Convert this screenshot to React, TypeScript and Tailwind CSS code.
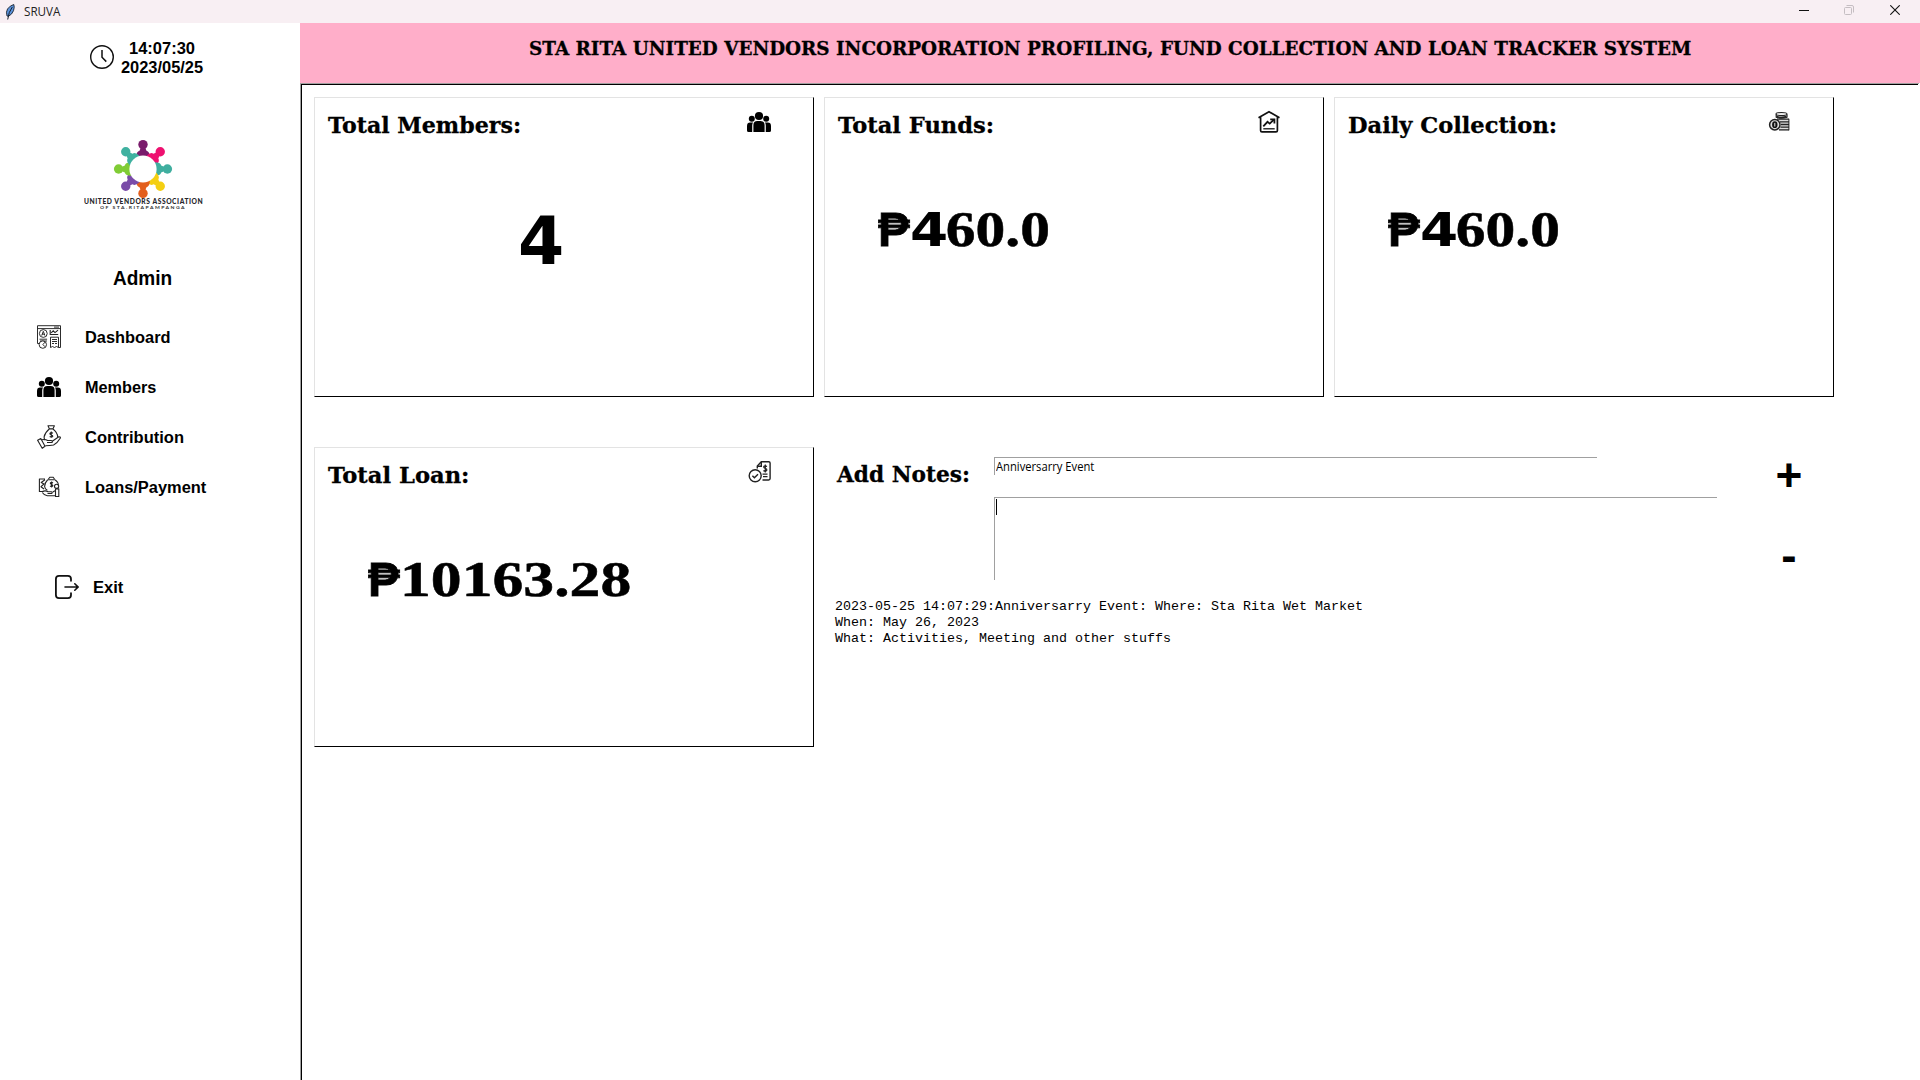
import { useLayoutEffect, useRef, useState } from "react";
import type { ReactNode } from "react";

/** A single line of text stretched horizontally to an exact width. */
function Fit({ width, className = "", children }: { width: number; className?: string; children: ReactNode }) {
  const ref = useRef<HTMLSpanElement>(null);
  const [scale, setScale] = useState(1);
  useLayoutEffect(() => {
    if (ref.current) setScale(width / ref.current.offsetWidth);
  }, [width]);
  return (
    <div className={className} style={{ width }}>
      <span ref={ref} className="inline-block origin-left whitespace-pre" style={{ transform: `scaleX(${scale})` }}>
        {children}
      </span>
    </div>
  );
}

const SERIF = "font-['DejaVu_Serif',serif] font-bold [-webkit-text-stroke:0.3px_black]";
const DIGITS = "font-['Liberation_Serif',serif] font-bold [-webkit-text-stroke:0.5px_black]";

function PeopleIcon() {
  return (
    <svg viewBox="0 0 24 24" className="size-6" fill="#000">
      <circle cx="12" cy="6" r="4.1" />
      <circle cx="4.8" cy="8.8" r="3" />
      <circle cx="19.2" cy="8.8" r="3" />
      <path d="M6.400 22V15q0-4 4-4h3.200q4 0 4 4v7z" />
      <path d="M5.200 22H1.600Q0 22 0 20.400V16q0-3.400 3.200-3.400h2.900q-.9 1.200-.9 2.800z" />
      <path d="M18.800 22h3.600q1.600 0 1.600-1.600V16q0-3.400-3.200-3.400h-2.900q.9 1.200.9 2.800z" />
    </svg>
  );
}

function HouseChartIcon() {
  return (
    <svg viewBox="0 0 24 24" className="size-6" fill="none" stroke="#111" strokeWidth="1.700">
      <path d="M1.500 7.800 12 1.700l10.500 6.100M3.600 7v13.500q0 1.400 1.400 1.400h14q1.400 0 1.400-1.400V7" />
      <path d="m6.300 16.300 4.200-4.500 2.200 1.800 4-3.700" strokeWidth="1.800" />
      <path d="M13.200 9.400h4.200v4" strokeWidth="1.800" />
      <path d="M6.300 18.800h11.400" strokeWidth="1.300" />
    </svg>
  );
}

function CoinsIcon() {
  return (
    <svg viewBox="-1 0 24 24" className="size-6" fill="none" stroke="#222">
      <path d="M8.500 4v3.500q0 1.500 2 1.500h10.300V20.500H11l1.500-5-2-6" fill="#ddd" stroke="none" />
      <ellipse cx="13.500" cy="4" rx="5.500" ry="1.500" fill="#eee" strokeWidth="1.100" />
      <path d="M8.200 4.500v2.700q5.300 2 10.800 0V4.500" strokeWidth="1.200" />
      <path d="M8.500 6.600q5 1.600 10 0" strokeWidth="1.600" />
      <path d="M9 9.200h12M12 11.900h9M13 14.500h8M12.500 17.100h8.500M11 19.800h10" strokeWidth="1.300" />
      <path d="M20.900 8.800v11.500" strokeWidth="1" />
      <circle cx="6.800" cy="14.700" r="5.200" strokeWidth="1.500" fill="#ddd" />
      <ellipse cx="6.800" cy="14.700" rx="2.700" ry="3.400" fill="#111" stroke="none" />
      <path d="M6.800 12.900v3.600" stroke="#fff" strokeWidth=".9" />
    </svg>
  );
}

function BillCheckIcon() {
  return (
    <svg viewBox="-1 0 24 24" className="size-6" fill="none" stroke="#222" strokeWidth="1.400">
      <path d="M9.300 8.500V6l4-4.300h7.400q1.400 0 1.400 1.400v15.500q0 1.400-1.400 1.400h-6.200" />
      <path d="M9.300 6.200h4V2" />
      <path d="M19 6.500q-2.500-1.300-3.300.3c-.4 1.600 3.500 1.600 3.200 3.300q-.7 1.700-3.500.5M17.300 4.500v8" strokeWidth="1.200" />
      <path d="M14.500 14.200h5M15 16.700h4.500" strokeWidth="1.300" />
      <circle cx="7.200" cy="15.800" r="6" fill="#fff" />
      <path d="m4.400 15.800 2 2 3.600-3.600" />
    </svg>
  );
}

function DashboardIcon() {
  return (
    <svg viewBox="0 0 24 24" className="size-6" fill="none" stroke="#222" strokeWidth=".95">
      <path d="M2.500 18.500H.5V.7h23v21.800h-2M.5 3.600h23M17 2.100h5" />
      <circle cx="6.300" cy="8.500" r="3.900" />
      <path d="m4.700 10.600 1.600-4.300 1.600 4.300M5.100 9.200h2.400" />
      <path d="M13.200 5v4.500h8M14.200 7.800l2-2 1.800 1.800 3-2.500" strokeWidth="1.100" />
      <path d="M2.500 14.200h7.600M3 16h7M13.500 12.200h8v10.300l-2-1-2 1-2-1-2 1zM15 14.500h5M15 16.500h5M15 18.500h2M18 18.500h2" />
      <circle cx="5.800" cy="19.600" r="3.700" fill="#fff" />
      <path d="m8.200 17-2.300 2.500 2 2.200" />
    </svg>
  );
}

function ContributionIcon() {
  return (
    <svg viewBox="0 0 24 24" className="size-6" fill="none" stroke="#222" strokeWidth="1.100" strokeLinejoin="round">
      <path d="M11 .7h6.400l-1.500 3.200h-3.500zM12.200 4Q8 7.500 7.100 12q-.1 2 1 3.200M16 4q4.500 3.600 4.700 8" />
      <path d="M15.900 8.200q-1.900-1.300-3 .1c-.5 1.500 3 1.400 2.900 3q-.7 1.500-3.100.3M14.300 6.600v6.100" />
      <path d="m.6 15.200 3.200-1.700 4.200 7.800-2.800 2zM4.600 14.800q3.600-1 6 .7h3.600q1.800.4.900 2H10M15.300 16.200l6.500-4.400q1.800-.1 1.600 1.200-3 5-6.800 7-3.600.8-8.200.8" />
    </svg>
  );
}

function LoansIcon() {
  return (
    <svg viewBox="0 0 24 24" className="size-6" fill="none" stroke="#222" strokeWidth="1.100" strokeLinejoin="round">
      <path d="M8 4H2.400v12.500h4.200M8 4.800 4.200 7.500 7 9l-3 2.700L7 14M11.400 4 13 2.200h3L17.500 4" />
      <path d="M10.500 4.700h7.800M10.500 5Q7.500 8 7.600 11.500q.3 2.500 2.700 3.700M18.300 5q3 2 3 5.200" />
      <path d="M16 8q-1.700-1.200-2.700.1c-.3 1.400 2.600 1.300 2.600 2.700q-.7 1.400-2.900.3M14.600 6.500v6" />
      <circle cx="19.600" cy="11.300" r="2.100" />
      <path d="M5.300 16.500q3.200-1.300 5.700.3h3.300q1.600.5.500 1.700h-4.300M5.300 17.500q2 3 5 3.300h8.200M15.800 17l2.700-1.500V14l3.300-.3v7.800h-3.300V16" />
    </svg>
  );
}

function ExitIcon() {
  return (
    <svg viewBox="0 0 24 24" className="size-6" fill="none" stroke="#111" strokeWidth="1.800" strokeLinecap="round">
      <path d="M16 5.800V4q0-3.100-3.100-3.100H4Q.9.900.9 4v16q0 3.100 3.100 3.100h8.900Q16 23.100 16 20v-1.800" />
      <path d="M10 12h13M19.800 8.800 23 12l-3.200 3.200" strokeWidth="1.600" />
    </svg>
  );
}

function ClockIcon() {
  return (
    <svg viewBox="0 0 24 24" className="size-6" fill="none" stroke="#111">
      <circle cx="12" cy="12" r="11.300" strokeWidth="1.400" />
      <path d="M12 5v7.300l4.300 4.300" strokeWidth="1.500" />
    </svg>
  );
}

const LOGO_COLORS = ["#7a1b6c", "#ee1170", "#3fae9f", "#f4cf12", "#e35f1d", "#7a4ca8", "#80cc35", "#3fb1a0"];

function Logo() {
  return (
    <div className="flex w-[120px] flex-col items-center">
      <svg viewBox="-30 -30 60 60" className="size-[60px]">
        {LOGO_COLORS.map((color, i) => (
          <g key={color + i} fill={color} transform={`rotate(${i * 45})`}>
            <circle cx="0" cy="-24.400" r="4.700" />
            <path d="M-6.800-11.500Q-6.800-17.500-3.500-18.200L-2.300-21h4.600l1.200 2.800Q6.800-17.500 6.800-11.500z" />
          </g>
        ))}
        <circle r="13.600" fill="#fff" />
      </svg>
      <Fit width={119} className="-mt-px h-2 font-['Lato',sans-serif] text-[7.200px] leading-2 font-black tracking-[0.6px] text-[#26262b]">
        UNITED VENDORS ASSOCIATION
      </Fit>
      <Fit width={86} className="-mt-px -ml-px h-[5px] font-['Lato',sans-serif] text-[4.500px] leading-[5px] font-bold tracking-[1.300px] text-[#333]">
        OF STA.RITAPAMPANGA
      </Fit>
    </div>
  );
}

function NavItem({ icon, label, width }: { icon: ReactNode; label: string; width: number }) {
  return (
    <div className="flex h-[50px] items-center">
      {icon}
      <Fit width={width} className="ml-6 pt-0.5 text-base leading-5 font-bold">{label}</Fit>
    </div>
  );
}

function Card({ title, width, icon, children }: { title: string; width: number; icon: ReactNode; children: ReactNode }) {
  return (
    <section className="h-[300px] w-[500px] border border-t-[#e3e3e3] border-r-black border-b-black border-l-[#e3e3e3]">
      <div className="flex h-[43px] justify-between pt-3 pr-[42px] pl-[13px]">
        <Fit width={width} className={`mt-px text-[22px] leading-7 ${SERIF}`}>{title}</Fit>
        {icon}
      </div>
      {children}
    </section>
  );
}

function Amount({ value, width }: { value: string; width: number }) {
  return (
    <div className="mt-[58px] ml-[53px] flex h-[60px]">
      <Fit width={32} className="font-['Liberation_Sans',sans-serif] text-[49px] leading-[60px] font-bold [-webkit-text-stroke:0.8px_black]">₱</Fit>
      <Fit width={width} className={`text-[51px] leading-[60px] ${DIGITS}`}>
        {value.split("").map((char, i) =>
          char === "4" ? (
            <span key={i} className="font-['DejaVu_Sans',sans-serif] text-[47px] leading-none tracking-[-2px] [-webkit-text-stroke:0px]">4</span>
          ) : (
            char
          ),
        )}
      </Fit>
    </div>
  );
}

function TitleBar() {
  return (
    <header className="flex h-[23px] shrink-0 items-center bg-[#f8eff3]">
      <svg viewBox="0 0 10 16" className="ml-[5px] h-4 w-[10px]">
        <path d="M8.800.5q1 2.500-.3 6.200Q7 10.500 3.500 12.300L2 12Q.7 8 2.500 5 5 1.500 8.800.5z" fill="#5b93dc" stroke="#16202e" strokeWidth=".9" />
        <path d="M7.300 3Q3.500 8 2.700 15.500" fill="none" stroke="#16202e" strokeWidth="1" />
      </svg>
      <Fit width={36} className="ml-[9px] font-['Open_Sans',sans-serif] text-xs leading-5 text-[#222]">SRUVA</Fit>
      <div className="mr-5 ml-auto flex items-center pb-[3px]">
        <svg viewBox="0 0 10 10" className="mr-[35px] size-[10px]"><path d="M0 5.500h10" stroke="#111" /></svg>
        <svg viewBox="0 0 10 10" className="mr-9 size-[10px]" fill="none" stroke="#c5bec2">
          <rect x=".5" y="2.500" width="7" height="7" rx="1" />
          <path d="M2.500.5H8q1.500 0 1.500 1.500v5.500" />
        </svg>
        <svg viewBox="0 0 10 10" className="size-[10px]"><path d="m.3.300 9.400 9.400m0-9.400L.3 9.700" stroke="#111" strokeWidth="1.100" /></svg>
      </div>
    </header>
  );
}

function Sidebar() {
  return (
    <aside className="w-[300px] shrink-0">
      <div className="flex pt-[16px] pl-[90px]">
        <div className="mt-[6px]"><ClockIcon /></div>
        <div className="ml-[7px] flex flex-col items-center text-base leading-[19px] font-bold">
          <Fit width={66} className="h-[19px]">14:07:30</Fit>
          <Fit width={82} className="h-[19px]">2023/05/25</Fit>
        </div>
      </div>
      <div className="mt-[62px] ml-[83px]"><Logo /></div>
      <Fit width={59} className="mt-[56px] ml-[113px] h-6 text-xl leading-6 font-bold">Admin</Fit>
      <nav className="mt-[22px] ml-[37px]">
        <NavItem icon={<DashboardIcon />} label="Dashboard" width={86} />
        <NavItem icon={<PeopleIcon />} label="Members" width={71} />
        <NavItem icon={<ContributionIcon />} label="Contribution" width={99} />
        <NavItem icon={<LoansIcon />} label="Loans/Payment" width={121} />
      </nav>
      <div className="mt-[63px] ml-[55px] flex items-center">
        <ExitIcon />
        <Fit width={30} className="ml-[14px] pt-0.5 text-base leading-5 font-bold">Exit</Fit>
      </div>
    </aside>
  );
}

function Notes() {
  return (
    <section className="flex w-[1010px] pt-[10px]">
      <div className="w-[893px]">
        <div className="flex">
          <Fit width={133} className={`mt-[3px] ml-[13px] h-7 text-[22px] leading-7 ${SERIF}`}>Add Notes:</Fit>
          <div className="ml-6">
            <div className="h-[18px] w-[603px] border-t border-l border-[#a0a0a0] pl-px">
              <Fit width={98} className="font-['Open_Sans',sans-serif] text-xs leading-[18px]">Anniversarry Event</Fit>
            </div>
            <div className="mt-[22px] h-[83px] w-[723px] border-t border-l border-[#a0a0a0] pt-px pl-px">
              <div className="h-4 w-px bg-black" />
            </div>
          </div>
        </div>
        <pre className="mt-[19px] ml-[11px] font-['Liberation_Mono',monospace] text-[13.333px] leading-4">
          {"2023-05-25 14:07:29:Anniversarry Event: Where: Sta Rita Wet Market\nWhen: May 26, 2023\nWhat: Activities, Meeting and other stuffs"}
        </pre>
      </div>
      <div className="ml-[52px] flex w-[40px] flex-col items-center text-[46px] leading-[48px] font-bold">
        <span className="-mt-[6px]">+</span>
        <span className="mt-[32px]">-</span>
      </div>
    </section>
  );
}

export default function App() {
  return (
    <div className="flex h-[1080px] w-[1920px] flex-col overflow-hidden bg-white font-['Liberation_Sans',sans-serif] text-black">
      <TitleBar />
      <div className="flex min-h-0 flex-1">
        <Sidebar />
        <main className="flex flex-1 flex-col">
          <div className="h-[60px] shrink-0 bg-[#ffaec9] pt-[11px] pl-[229px]">
            <Fit width={1162} className={`text-[19px] leading-7 ${SERIF}`}>
              STA RITA UNITED VENDORS INCORPORATION PROFILING, FUND COLLECTION AND LOAN TRACKER SYSTEM
            </Fit>
          </div>
          <div className="mr-px flex-1 border-t border-l border-[#a0a0a0]">
            <div className="mr-px h-full border-t border-l border-black pt-3 pl-3">
              <div className="flex gap-[10px]">
                <Card title="Total Members:" width={193} icon={<PeopleIcon />}>
                  <Fit width={46} className="mt-[61px] ml-[203px] font-['DejaVu_Sans',sans-serif] text-[65px] leading-[80px] font-bold">4</Fit>
                </Card>
                <Card title="Total Funds:" width={156} icon={<HouseChartIcon />}>
                  <Amount value="460.0" width={140} />
                </Card>
                <Card title="Daily Collection:" width={209} icon={<CoinsIcon />}>
                  <Amount value="460.0" width={140} />
                </Card>
              </div>
              <div className="mt-[50px] flex gap-[10px]">
                <Card title="Total Loan:" width={141} icon={<BillCheckIcon />}>
                  <Amount value="10163.28" width={231} />
                </Card>
                <Notes />
              </div>
            </div>
          </div>
        </main>
      </div>
    </div>
  );
}
